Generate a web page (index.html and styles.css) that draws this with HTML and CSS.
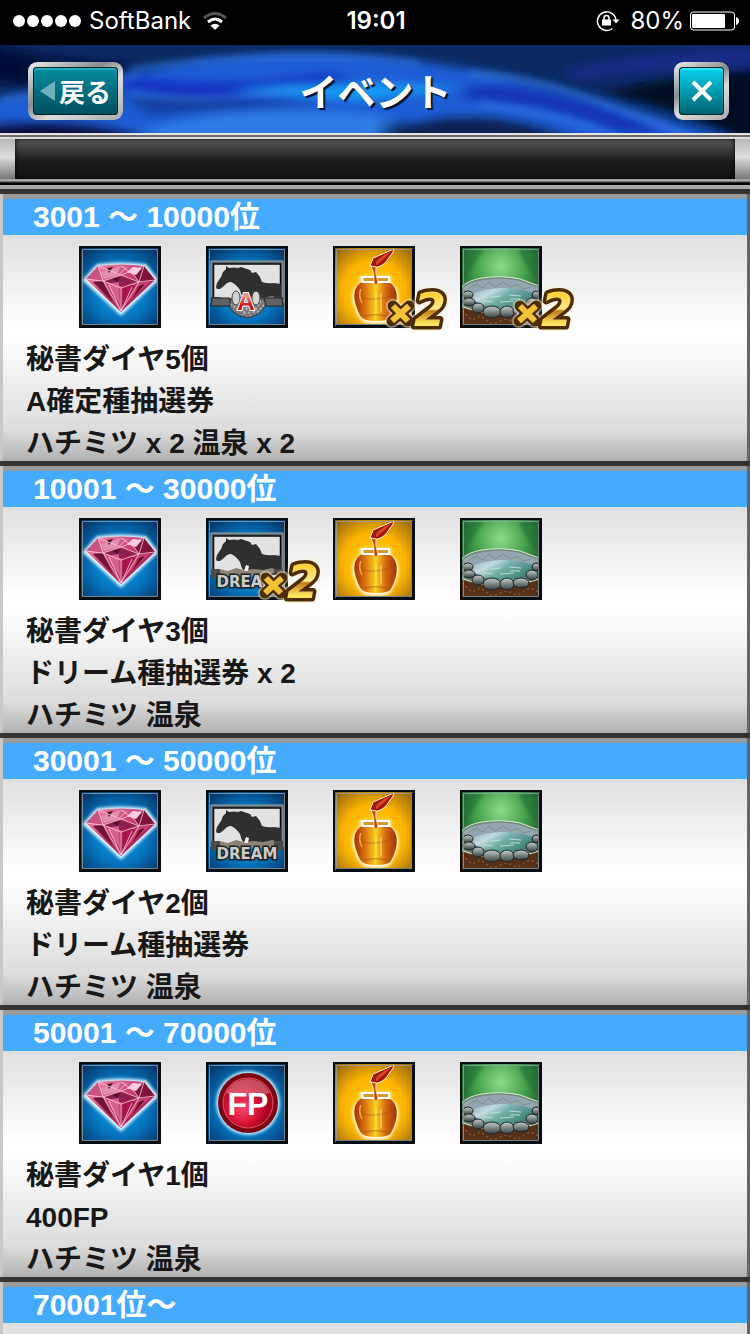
FILE: index.html
```html
<!DOCTYPE html>
<html lang="ja">
<head>
    <meta charset="UTF-8">
    <meta name="viewport" content="width=device-width, initial-scale=1.0">
    <title>イベント</title>
    <link rel="stylesheet" href="styles.css">
</head>
<body>
    <!-- shared artwork -->
    <svg class="sprites" aria-hidden="true">
        <defs>
            <radialGradient id="blueBg" cy="0.55" r="0.7">
                <stop offset="0" stop-color="#0aa5ee"/>
                <stop offset="0.5" stop-color="#0573bd"/>
                <stop offset="1" stop-color="#062c5c"/>
            </radialGradient>
            <radialGradient id="goldBg" cy="0.55" r="0.75">
                <stop offset="0" stop-color="#ffd21c"/>
                <stop offset="0.5" stop-color="#fbb400"/>
                <stop offset="1" stop-color="#7d500b"/>
            </radialGradient>
            <radialGradient id="greenBg" cy="0.25" r="0.65">
                <stop offset="0" stop-color="#8fdc8c"/>
                <stop offset="0.5" stop-color="#3f9c48"/>
                <stop offset="1" stop-color="#164523"/>
            </radialGradient>
            <linearGradient id="gem" x2="1" y2="1">
                <stop offset="0" stop-color="#f49abc"/>
                <stop offset="0.5" stop-color="#bd3569"/>
                <stop offset="1" stop-color="#8c1540"/>
            </linearGradient>
            <linearGradient id="honey">
                <stop offset="0" stop-color="#a93008"/>
                <stop offset="0.25" stop-color="#d8700f"/>
                <stop offset="0.5" stop-color="#fbd21c"/>
                <stop offset="0.72" stop-color="#d8700f"/>
                <stop offset="1" stop-color="#a0300a"/>
            </linearGradient>
            <linearGradient id="water" x2="1" y2="0.6">
                <stop offset="0" stop-color="#7f979d"/>
                <stop offset="0.4" stop-color="#c3dcdf"/>
                <stop offset="0.6" stop-color="#74b3a9"/>
                <stop offset="1" stop-color="#3e8077"/>
            </linearGradient>
            <linearGradient id="stone" x2="0" y2="1">
                <stop offset="0" stop-color="#c2cbc9"/>
                <stop offset="0.5" stop-color="#7d8986"/>
                <stop offset="1" stop-color="#343b3c"/>
            </linearGradient>
            <radialGradient id="ball" cx="0.4" cy="0.6">
                <stop offset="0" stop-color="#ff4a6c"/>
                <stop offset="0.6" stop-color="#d81437"/>
                <stop offset="1" stop-color="#a80522"/>
            </radialGradient>
            <linearGradient id="goldText" x2="0" y2="1">
                <stop offset="0.2" stop-color="#ffd23a"/>
                <stop offset="0.48" stop-color="#ffe98a"/>
                <stop offset="0.52" stop-color="#c07a16"/>
                <stop offset="0.75" stop-color="#ffe65e"/>
            </linearGradient>
            <linearGradient id="redText" x2="0" y2="1">
                <stop offset="0.3" stop-color="#f58a86"/>
                <stop offset="0.6" stop-color="#d31c1c"/>
                <stop offset="1" stop-color="#a80a0a"/>
            </linearGradient>
            <filter id="glow" x="-20%" y="-20%" width="140%" height="140%"><feGaussianBlur stdDeviation="1.5"/></filter>
            <filter id="soft" x="-20%" y="-50%" width="140%" height="200%"><feGaussianBlur stdDeviation="9 5"/></filter>
            <filter id="streak" x="-20%" y="-50%" width="140%" height="200%"><feGaussianBlur stdDeviation="3"/></filter>
        </defs>

        <symbol id="frame" viewBox="0 0 82 82">
            <path d="M1 1h80v80H1z" fill="none" stroke="#060d13" stroke-width="2"/>
            <path d="M3 79.500H79.500V3" fill="none" stroke="#060d13" stroke-width="3"/>
            <path d="M3.500 3.500h75v75h-75z" fill="none" stroke="#8fa3a8" stroke-opacity="0.8"/>
        </symbol>

        <symbol id="diamond" viewBox="0 0 82 82">
            <path d="M0 0h82v82H0z" fill="url(#blueBg)"/>
            <path d="M6 34L19 20Q42 17 66 20L77 34L42 67Z" fill="#fff" stroke="#dff6ff" stroke-width="4" filter="url(#glow)"/>
            <path d="M7 33L19 20Q42 17 65 20L76 34L42 66Z" fill="url(#gem)"/>
            <path d="M19 20L7 33L24 35Z" fill="#c9517f"/>
            <path d="M65 20L76 34L60 36L54 26Z" fill="#7f143d"/>
            <path d="M24 35L42 29L60 36L42 40Z" fill="#8c2050"/>
            <path d="M22 26L42 20L37 30L25 33Z" fill="#e58fb3"/>
            <path d="M54 21L63 22L57 29L48 26Z" fill="#ffd0df"/>
            <path d="M14 36L24 35L34 56Z" fill="#711239"/>
            <path d="M28 38L40 36L41 59Z" fill="#d9608e"/>
            <path d="M44 37L56 40L43 62Z" fill="#a4164a"/>
            <path d="M58 38L71 36L48 57Z" fill="#cf3f74"/>
            <path d="M60 40L66 38L53 53Z" fill="#5f0e2d"/>
            <path d="M28 22L34 21L30 27ZM33 33L41 31L39 36Z" fill="#5f0e2d"/>
            <path d="M7 33L24 35L42 65L60 36L76 34M24 35L19 20L42 29L65 20L60 36M24 35L42 29L60 36L42 42ZM42 42V65M30 39L42 65L53 41M42 20L54 28L60 36M48 21L37 31" fill="none" stroke="#ffc9dc" stroke-width="0.8"/>
        </symbol>

        <symbol id="ticket" viewBox="0 0 82 82">
            <path d="M0 0h82v82H0z" fill="url(#blueBg)"/>
            <path d="M5 15h72v42H5z" fill="#59656a" stroke="#a2aeb3"/>
            <path d="M7.500 18h67v37h-67z" fill="#e2e2e4" stroke="#0b0b0b" stroke-width="1.500"/>
            <path d="M10 41L11 37L15 31L17 26L20 23L20 20L23 22Q28 21 32 22L35 21L44 24L46 27L50 26L54 31L56 36Q62 38 68 37L75 38V54H38Q35 49 34 44Q29 37 25 36Q21 36 18 40L14 43L11 43Z" fill="#303031"/>
            <path d="M9 54L13 51L22 53L30 50L38 52L48 51L57 52L66 50L75 53V57H7Z" fill="#8b8479"/>
            <path d="M38 53L40 47L43 48L42 53Z" fill="#eee"/>
            <path d="M5 51h9v9H5zM68 51h9v9h-9z" fill="#494a4a"/>
        </symbol>

        <symbol id="wreath" viewBox="0 0 82 82">
            <path d="M22 54Q41 47 60 54Q60 68 41 72Q22 68 22 54Z" fill="#777" stroke="#303030"/>
            <path d="M24 58L35 65M28 54L40 69M34 52L45 70M48 52L36 69M55 55L47 67M58 59L50 68" stroke="#b5b5b5" stroke-width="2" stroke-dasharray="2 2"/>
            <path d="M6 52h18v8H5zM58 52h18l1 8H60z" fill="#5e6264" stroke="#222"/>
            <ellipse cx="30" cy="52" rx="4" ry="7" fill="#d5d5d5" stroke="#444"/>
            <ellipse cx="50" cy="52" rx="4" ry="7" fill="#d5d5d5" stroke="#444"/>
        </symbol>

        <symbol id="honey-pot" viewBox="0 0 82 82">
            <path d="M0 0h82v82H0z" fill="url(#goldBg)"/>
            <path d="M28 32H57L56 37C67 43 66 56 58 71Q56 77 43 77Q31 77 27 71C18 54 18 43 29 37Z" fill="#fff" stroke="#fff6bd" stroke-width="3" filter="url(#glow)"/>
            <path d="M37 20L40 12Q52 7 61 3L60 6L53 16Q47 22 41 21Z" fill="#a6160d" stroke="#fff1c1" stroke-width="1"/>
            <path d="M43 16Q49 9 58 6Q50 14 43 19Z" fill="#d84a2c"/>
            <path d="M29 36C18 42 20 56 28 71Q31 75 43 75Q56 75 58 71C66 56 66 42 56 36Z" fill="url(#honey)"/>
            <path d="M29 31H56V36H30Z" fill="#d9982c" stroke="#fff" stroke-width="2"/>
            <path d="M38 20Q42 27 41 36L43 41L45 36Q42 28 43 21Z" fill="#c24910" stroke="#fff0b8" stroke-width="0.8"/>
            <path d="M23 48Q29 54 43 53Q56 52 62 47M31 70Q42 67 55 70" fill="none" stroke="#9d3a0a" stroke-opacity="0.5"/>
            <path d="M28 43Q25 49 29 57M43 46V68M48 47V66" fill="none" stroke="#ffeb79" stroke-opacity="0.6" stroke-width="1.500"/>
        </symbol>

        <symbol id="spa" viewBox="0 0 82 82">
            <path d="M0 0h82v82H0z" fill="url(#greenBg)"/>
            <path d="M3 35Q15 18 24 3H3ZM79 35Q64 22 59 3H79Z" fill="#1c5f2b" fill-opacity="0.45" filter="url(#glow)"/>
            <path d="M0 58H82V82H0Z" fill="#573019"/>
            <path d="M2 65l10 9 8-4 12 8 14-5 12 4 12-7 11 5" fill="none" stroke="#8e5630" stroke-width="1.500" stroke-dasharray="2 3"/>
            <path d="M0 42Q8 34 22 32Q42 29 60 33L82 41V60Q60 68 41 68T0 60Z" fill="#71847f" stroke="#d3f3cd" stroke-width="1"/>
            <path d="M9 46Q22 38 43 38T74 47Q76 61 44 62Q11 60 9 46Z" fill="url(#water)"/>
            <path d="M3 42Q12 35 24 34Q42 31 60 35L79 42L76 48Q60 42 43 42T8 49Z" fill="#94a6ae"/>
            <path d="M9 42l8-4 5 4 7-6 6 5 8-5 7 5 7-3 6 5 8-2" fill="none" stroke="#74868d" stroke-width="0.800"/>
            <path d="M31 51l10-1M40 56l14-1M49 49l12 1M24 55l9 1M50 53l10 0" stroke="#cde9e3" stroke-width="0.800"/>
            <g fill="url(#stone)" stroke="#1c2224">
                <ellipse cx="8" cy="49" rx="5" ry="4"/>
                <ellipse cx="9" cy="56" rx="6" ry="4"/>
                <ellipse cx="18" cy="62" rx="6" ry="5"/>
                <ellipse cx="32" cy="66" rx="9" ry="6"/>
                <ellipse cx="47" cy="66" rx="7" ry="6"/>
                <ellipse cx="61" cy="65" rx="8" ry="5"/>
                <ellipse cx="72" cy="57" rx="6" ry="5"/>
                <ellipse cx="76" cy="49" rx="4" ry="4"/>
            </g>
        </symbol>

        <symbol id="fp" viewBox="0 0 82 82">
            <path d="M0 0h82v82H0z" fill="url(#blueBg)"/>
            <circle cx="42" cy="41" r="32" fill="#bdefff" filter="url(#glow)"/>
            <circle cx="42" cy="41" r="30" fill="#7c0713"/>
            <circle cx="42" cy="41" r="25" fill="url(#ball)" stroke="#e25468"/>
            <path d="M20 31Q27 17 42 17T64 31Q43 38 20 31Z" fill="#f3a8b0" fill-opacity="0.45"/>
        </symbol>

        <symbol id="cross" viewBox="0 0 64 48">
            <path d="M8 23L23 38M24 23L7 38" stroke="#4c2c04" stroke-width="11" stroke-linecap="round"/>
            <path d="M8 23L23 38M24 23L7 38" stroke="#f3c136" stroke-width="6"/>
        </symbol>
    </svg>

    <div class="status-bar">
        <div class="carrier">
            <svg width="68" height="12" viewBox="0 0 68 12" fill="#fff" aria-hidden="true">
                <circle cx="6" cy="6" r="6"/><circle cx="20" cy="6" r="6"/><circle cx="34" cy="6" r="6"/><circle cx="48" cy="6" r="6"/><circle cx="62" cy="6" r="6"/>
            </svg>
            <span>SoftBank</span>
            <svg width="24" height="18" viewBox="0 0 24 18" fill="none" stroke="#fff" stroke-width="3" aria-hidden="true">
                <path d="M1 6Q12 -3 23 6" stroke="#555"/>
                <path d="M5 10Q12 4 19 10"/>
                <path d="M12 18L7.500 13.500Q12 10 16.500 13.500Z" fill="#fff" stroke="none"/>
            </svg>
        </div>
        <span class="clock">19:01</span>
        <div class="battery">
            <svg width="24" height="22" viewBox="0 0 24 22" fill="none" stroke="#fff" stroke-width="1.500" aria-hidden="true">
                <path d="M16.500 18.500A9.300 9.300 0 1 1 20 10"/>
                <path d="M16.500 9.500H23.500L20 13.500Z" fill="#fff" stroke="none"/>
                <path d="M6 9.500h9v6H6z" fill="#fff" stroke="none"/>
                <path d="M8 10V8Q8 5.500 10.500 5.500T13 8V10"/>
            </svg>
            <span>80%</span>
            <svg width="49" height="20" viewBox="0 0 49 20" aria-hidden="true">
                <rect x="0.500" y="1" width="44" height="18" rx="3" fill="none" stroke="#fff"/>
                <rect x="2" y="3" width="33" height="14" rx="1" fill="#fff"/>
                <path d="M46 6Q49 7 49 10T46 14Z" fill="#fff"/>
            </svg>
        </div>
    </div>

    <header class="header">
        <svg class="waves" viewBox="0 0 750 88" preserveAspectRatio="none" aria-hidden="true">
            <path d="M0 0H750V88H0Z" fill="#0b2a62"/>
            <g filter="url(#soft)">
                <path d="M-20 -5Q60 20 130 18L100 50L-20 36Z" fill="#060b3a"/>
                <path d="M-20 56Q100 38 140 26Q250 2 360 10Q470 20 560 44T740 96H540Q400 60 300 96H-20Z" fill="#1f5dd6"/>
                <path d="M120 30Q240 44 330 26L360 40L300 52Q200 56 120 44Z" fill="#1530c4"/>
                <path d="M470 40Q550 36 670 88H620Q540 56 460 54Z" fill="#1730b4"/>
                <path d="M230 46Q350 34 460 44L360 54Z" fill="#16a0fa"/>
                <path d="M120 50Q240 50 330 62Q220 62 150 72Z" fill="#123fa0"/>
                <path d="M130 90Q240 54 390 72L380 100H130Z" fill="#2e7de6"/>
                <path d="M-20 80Q90 66 170 100H-20Z" fill="#071144"/>
                <path d="M560 26Q640 4 780 0V22Q660 24 580 36Z" fill="#192a85"/>
                <path d="M600 50Q680 28 780 22V110H750Q690 60 600 50Z" fill="#020a22"/>
                <path d="M410 78Q500 56 590 100H390Z" fill="#0b2453"/>
            </g>
            <path d="M470 28Q530 32 580 50T690 92" fill="none" stroke="#4490f4" stroke-width="5" stroke-opacity="0.5" filter="url(#streak)"/>
            <path d="M130 24Q300 2 420 18M130 48Q200 60 300 44M0 55Q80 42 140 30M480 60Q550 66 620 92" fill="none" stroke="#4390f4" stroke-width="4" stroke-opacity="0.5" filter="url(#streak)"/>
        </svg>
        <button class="btn btn-back" type="button">
            <svg width="15" height="20" viewBox="0 0 15 20" aria-hidden="true"><path d="M0 10L15 0V20Z" fill="#6eb2bd"/></svg>
            <span>戻る</span>
        </button>
        <h1>イベント</h1>
        <button class="btn btn-close" type="button" aria-label="閉じる">
            <svg width="24" height="24" viewBox="0 0 24 24" aria-hidden="true"><path d="M3 3L21 21M21 3L3 21" stroke="#fff" stroke-width="4"/></svg>
        </button>
    </header>

    <div class="ticker"><div class="ticker-screen"></div></div>

    <main class="rewards">
        <section class="rank">
            <h2>3001 〜 10000位</h2>
            <div class="rank-body">
                <div class="icons">
                    <div class="icon"><svg viewBox="0 0 82 82"><use href="#diamond"/><use href="#frame"/></svg></div>
                    <div class="icon"><svg viewBox="0 0 82 82"><use href="#ticket"/><use href="#wreath"/><text class="grade" x="40" y="64" text-anchor="middle">A</text><use href="#frame"/></svg></div>
                    <div class="icon">
                        <svg viewBox="0 0 82 82"><use href="#honey-pot"/><use href="#frame"/></svg>
                        <svg class="times" viewBox="0 0 64 48"><use href="#cross"/><text class="two" x="29" y="43">2</text></svg>
                    </div>
                    <div class="icon">
                        <svg viewBox="0 0 82 82"><use href="#spa"/><use href="#frame"/></svg>
                        <svg class="times" viewBox="0 0 64 48"><use href="#cross"/><text class="two" x="29" y="43">2</text></svg>
                    </div>
                </div>
                <p>秘書ダイヤ5個<br>A確定種抽選券<br>ハチミツ x 2 温泉 x 2</p>
            </div>
        </section>

        <section class="rank">
            <h2>10001 〜 30000位</h2>
            <div class="rank-body">
                <div class="icons">
                    <div class="icon"><svg viewBox="0 0 82 82"><use href="#diamond"/><use href="#frame"/></svg></div>
                    <div class="icon">
                        <svg viewBox="0 0 82 82"><use href="#ticket"/><text class="dream" x="41" y="69" text-anchor="middle">DREAM</text><use href="#frame"/></svg>
                        <svg class="times" viewBox="0 0 64 48"><use href="#cross"/><text class="two" x="29" y="43">2</text></svg>
                    </div>
                    <div class="icon"><svg viewBox="0 0 82 82"><use href="#honey-pot"/><use href="#frame"/></svg></div>
                    <div class="icon"><svg viewBox="0 0 82 82"><use href="#spa"/><use href="#frame"/></svg></div>
                </div>
                <p>秘書ダイヤ3個<br>ドリーム種抽選券 x 2<br>ハチミツ 温泉</p>
            </div>
        </section>

        <section class="rank">
            <h2>30001 〜 50000位</h2>
            <div class="rank-body">
                <div class="icons">
                    <div class="icon"><svg viewBox="0 0 82 82"><use href="#diamond"/><use href="#frame"/></svg></div>
                    <div class="icon"><svg viewBox="0 0 82 82"><use href="#ticket"/><text class="dream" x="41" y="69" text-anchor="middle">DREAM</text><use href="#frame"/></svg></div>
                    <div class="icon"><svg viewBox="0 0 82 82"><use href="#honey-pot"/><use href="#frame"/></svg></div>
                    <div class="icon"><svg viewBox="0 0 82 82"><use href="#spa"/><use href="#frame"/></svg></div>
                </div>
                <p>秘書ダイヤ2個<br>ドリーム種抽選券<br>ハチミツ 温泉</p>
            </div>
        </section>

        <section class="rank">
            <h2>50001 〜 70000位</h2>
            <div class="rank-body">
                <div class="icons">
                    <div class="icon"><svg viewBox="0 0 82 82"><use href="#diamond"/><use href="#frame"/></svg></div>
                    <div class="icon"><svg viewBox="0 0 82 82"><use href="#fp"/><text class="points" x="42" y="53" text-anchor="middle">FP</text><use href="#frame"/></svg></div>
                    <div class="icon"><svg viewBox="0 0 82 82"><use href="#honey-pot"/><use href="#frame"/></svg></div>
                    <div class="icon"><svg viewBox="0 0 82 82"><use href="#spa"/><use href="#frame"/></svg></div>
                </div>
                <p>秘書ダイヤ1個<br>400FP<br>ハチミツ 温泉</p>
            </div>
        </section>

        <section class="rank">
            <h2>70001位〜</h2>
            <div class="rank-body rank-next"></div>
        </section>
    </main>
</body>
</html>
```
FILE: styles.css
```css
* {
    box-sizing: border-box;
}
body {
    margin: 0;
    background-color: #000;
    font-family: "Liberation Sans", "Noto Sans CJK JP", sans-serif;
    color: #181818;
}
.sprites {
    position: absolute;
    width: 0;
    height: 0;
}

/* status bar */
.status-bar {
    display: grid;
    grid-template-columns: 1fr auto 1fr;
    align-items: center;
    height: 45px;
    padding: 0 11px 4px 13px;
    color: #fff;
    font-family: Inter, sans-serif;
    font-size: 24px;
}
.carrier, .battery {
    display: flex;
    align-items: center;
    gap: 8px;
}
.carrier svg:last-child {
    margin-left: 4px;
}
.battery {
    justify-content: flex-end;
    gap: 6px;
}
.battery span {
    margin-left: 4px;
}
.clock {
    font-weight: 600;
}

/* header */
.header {
    position: relative;
    display: grid;
    grid-template-columns: 1fr auto 1fr;
    align-items: center;
    height: 88px;
    padding: 3px 21px 0 28px;
    overflow: hidden;
}
.waves {
    position: absolute;
    top: 0;
    left: 0;
    width: 100%;
    height: 100%;
}
.header h1 {
    position: relative;
    margin: 4px 6px 0 0;
    color: #fff;
    font-size: 38px;
    line-height: 56px;
    text-shadow: 2px 2px 1px #06102c;
}
.btn {
    position: relative;
    display: flex;
    align-items: center;
    justify-content: center;
    gap: 4px;
    height: 58px;
    padding: 0;
    border: 5px solid transparent;
    border-radius: 9px;
    color: #fff;
    font-family: inherit;
    font-size: 26px;
    font-weight: bold;
    cursor: pointer;
}
.btn-back {
    width: 95px;
    background: linear-gradient(#078da0, #004e5c) padding-box, linear-gradient(150deg, #eee, #8b8b8e 40%, #ddd 60%, #aaa) border-box;
    box-shadow: inset 0 0 0 1px #02252c, inset 0 2px 1px 1px #20b1c1;
}
.btn-close {
    justify-self: end;
    width: 55px;
    background: linear-gradient(#06d5f3, #00606c) padding-box, linear-gradient(150deg, #eee, #8b8b8e 40%, #ddd 60%, #aaa) border-box;
    box-shadow: inset 0 0 0 1px #02252c, inset 0 2px 1px 1px #30e4f6;
}

/* empty message strip */
.ticker {
    height: 52px;
    padding: 6px 15px 5px;
    background: linear-gradient(#e6e2e2 0 2px, #6f6968 2px 4px, #ddd 4px 6px, #b8b8b8 6px, #ddd 24px, #777 46px, #ccc 47px, #555 49px, #000 50px);
}
.ticker-screen {
    height: 40px;
    background: linear-gradient(#5a5a5a, #1c1c1c 55%, #121212);
    box-shadow: inset 0 0 4px #000;
}

/* reward list */
.rewards {
    border-top: 4px solid #aaa;
    background: linear-gradient(90deg, #c8c8c8 50%, #666 50%);
}
.rank {
    border-top: 5px solid #333;
}
.rank h2 {
    margin: 0 3px;
    padding-left: 30px;
    border-top: 5px solid #999;
    background-color: #44abff;
    color: #fff;
    font-size: 30px;
    line-height: 36px;
}
.rank-body {
    margin: 0 3px;
    padding: 11px 23px 0;
    background: linear-gradient(#e0e0e0, #fff 40%, #fff 45%, #dcdcdc 85%, #aaa);
}
.rank-next {
    background: #e0e0e0;
}
.icons {
    display: flex;
    gap: 45px;
    padding-left: 53px;
}
.icon {
    position: relative;
    width: 82px;
    height: 82px;
}
.icon > svg {
    display: block;
    width: 82px;
    height: 82px;
}
.icon > .times {
    position: absolute;
    right: -34px;
    bottom: -3px;
    width: 64px;
    height: 48px;
    overflow: visible;
    filter: drop-shadow(0 0 1px #fff3d0) drop-shadow(0 0 1px #fff3d0);
}
.rank p {
    margin: 0 0 -4px;
    padding-top: 11px;
    font-size: 28px;
    font-weight: bold;
    line-height: 42px;
}

/* lettering inside the artwork */
.grade {
    fill: url(#redText);
    stroke: #fff;
    stroke-width: 2px;
    paint-order: stroke;
    font: bold 24px "Liberation Sans", sans-serif;
}
.dream {
    fill: #ccc;
    stroke: #222;
    stroke-width: 3px;
    paint-order: stroke;
    font: bold 15px "DejaVu Sans", sans-serif;
}
.points {
    fill: #fff;
    font: bold 32px "Liberation Sans", sans-serif;
}
.two {
    fill: url(#goldText);
    stroke: #4c2c04;
    stroke-width: 7px;
    stroke-linejoin: round;
    paint-order: stroke;
    font: italic bold 46px "DejaVu Sans", sans-serif;
}
```
